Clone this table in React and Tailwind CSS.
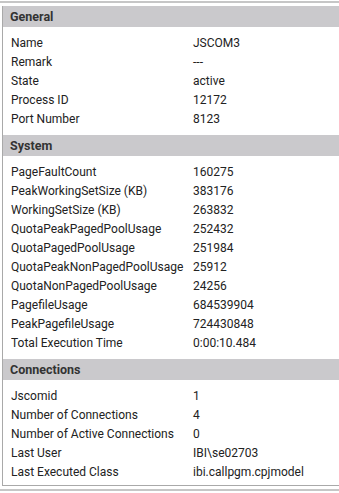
const sections = [
  {
    title: 'General',
    rows: [
      ['Name', 'JSCOM3'],
      ['Remark', '---'],
      ['State', 'active'],
      ['Process ID', '12172'],
      ['Port Number', '8123'],
    ],
  },
  {
    title: 'System',
    rows: [
      ['PageFaultCount', '160275'],
      ['PeakWorkingSetSize (KB)', '383176'],
      ['WorkingSetSize (KB)', '263832'],
      ['QuotaPeakPagedPoolUsage', '252432'],
      ['QuotaPagedPoolUsage', '251984'],
      ['QuotaPeakNonPagedPoolUsage', '25912'],
      ['QuotaNonPagedPoolUsage', '24256'],
      ['PagefileUsage', '684539904'],
      ['PeakPagefileUsage', '724430848'],
      ['Total Execution Time', '0:00:10.484'],
    ],
  },
  {
    title: 'Connections',
    rows: [
      ['Jscomid', '1'],
      ['Number of Connections', '4'],
      ['Number of Active Connections', '0'],
      ['Last User', 'IBI\\se02703'],
      ['Last Executed Class', 'ibi.callpgm.cpjmodel'],
    ],
  },
];

const Section = ({ title, rows, last }) => (
  <div>
    <div className="h-[21px] bg-[#cac9cc] pl-[7px] text-[12.5px] font-bold leading-[21px] text-[#333]">
      {title}
    </div>
    <div className={last ? 'pt-[7px] pb-[3px] pl-[8px]' : 'pt-[7px] pb-[6px] pl-[8px]'}>
      {rows.map(([label, value]) => (
        <div key={label} className="grid grid-cols-[182px_1fr] h-[19px] text-[12px] leading-[19px] text-[#222]">
          <span className="whitespace-nowrap overflow-hidden">{label}</span>
          <span className="whitespace-nowrap">{value}</span>
        </div>
      ))}
    </div>
  </div>
);

export default function App() {
  return (
    <div className="w-[339px] h-[493px] overflow-hidden bg-white" style={{ fontFamily: 'Roboto, "Liberation Sans", sans-serif' }}>
      <div className="mt-[1px] h-[2px] w-full bg-[#c6c6c6]" />
      <div className="mt-[3px] ml-[2px] w-[360px] border-l border-b border-[#a9a9a9]">
        {sections.map((s, i) => (
          <Section key={s.title} {...s} last={i === sections.length - 1} />
        ))}
      </div>
      <div className="mt-[3px] h-[2px] w-full bg-[#c6c6c6]" />
    </div>
  );
}
